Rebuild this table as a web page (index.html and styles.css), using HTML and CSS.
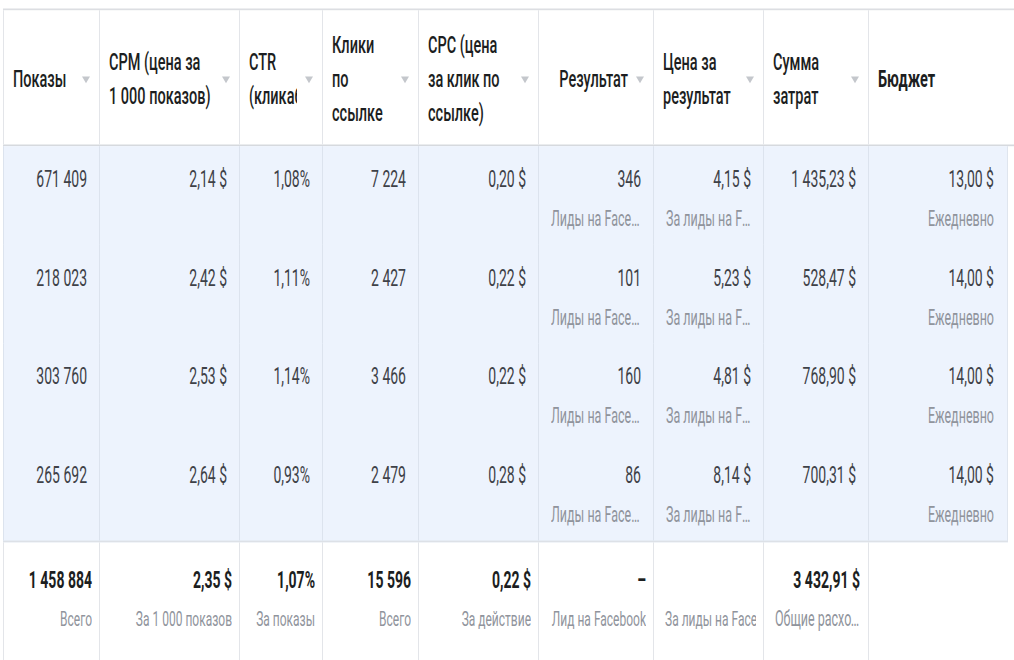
FILE: index.html
```html
<!DOCTYPE html>
<html lang="ru">
<head>
<meta charset="utf-8">
<title>Статистика</title>
<link rel="stylesheet" href="styles.css">
</head>
<body>
<div class="sheet">
  <div class="row head">
    <div class="hcell"><span class="label">Показы</span><span class="arrow"></span></div>
    <div class="hcell"><span class="label">CPM (цена за<br>1 000 показов)</span><span class="arrow"></span></div>
    <div class="hcell"><span class="label clip">CTR<br>(кликабельность ссылки)</span><span class="arrow"></span></div>
    <div class="hcell"><span class="label">Клики<br>по<br>ссылке</span><span class="arrow"></span></div>
    <div class="hcell"><span class="label">CPC (цена<br>за клик по<br>ссылке)</span><span class="arrow"></span></div>
    <div class="hcell right"><span class="label">Результат</span><span class="arrow"></span></div>
    <div class="hcell"><span class="label">Цена за<br>результат</span><span class="arrow"></span></div>
    <div class="hcell"><span class="label">Сумма<br>затрат</span><span class="arrow"></span></div>
    <div class="hcell last"><span class="label strong">Бюджет</span></div>
  </div>

  <div class="body">
    <div class="row">
      <div class="cell"><div class="v">671 409</div></div>
      <div class="cell"><div class="v">2,14 $</div></div>
      <div class="cell"><div class="v">1,08%</div></div>
      <div class="cell"><div class="v">7 224</div></div>
      <div class="cell"><div class="v">0,20 $</div></div>
      <div class="cell"><div class="v">346</div><div class="s">Лиды на Facebook</div></div>
      <div class="cell"><div class="v">4,15 $</div><div class="s">За лиды на Facebook</div></div>
      <div class="cell"><div class="v">1 435,23 $</div></div>
      <div class="cell last"><div class="v">13,00 $</div><div class="s">Ежедневно</div></div>
    </div>
    <div class="row">
      <div class="cell"><div class="v">218 023</div></div>
      <div class="cell"><div class="v">2,42 $</div></div>
      <div class="cell"><div class="v">1,11%</div></div>
      <div class="cell"><div class="v">2 427</div></div>
      <div class="cell"><div class="v">0,22 $</div></div>
      <div class="cell"><div class="v">101</div><div class="s">Лиды на Facebook</div></div>
      <div class="cell"><div class="v">5,23 $</div><div class="s">За лиды на Facebook</div></div>
      <div class="cell"><div class="v">528,47 $</div></div>
      <div class="cell last"><div class="v">14,00 $</div><div class="s">Ежедневно</div></div>
    </div>
    <div class="row">
      <div class="cell"><div class="v">303 760</div></div>
      <div class="cell"><div class="v">2,53 $</div></div>
      <div class="cell"><div class="v">1,14%</div></div>
      <div class="cell"><div class="v">3 466</div></div>
      <div class="cell"><div class="v">0,22 $</div></div>
      <div class="cell"><div class="v">160</div><div class="s">Лиды на Facebook</div></div>
      <div class="cell"><div class="v">4,81 $</div><div class="s">За лиды на Facebook</div></div>
      <div class="cell"><div class="v">768,90 $</div></div>
      <div class="cell last"><div class="v">14,00 $</div><div class="s">Ежедневно</div></div>
    </div>
    <div class="row">
      <div class="cell"><div class="v">265 692</div></div>
      <div class="cell"><div class="v">2,64 $</div></div>
      <div class="cell"><div class="v">0,93%</div></div>
      <div class="cell"><div class="v">2 479</div></div>
      <div class="cell"><div class="v">0,28 $</div></div>
      <div class="cell"><div class="v">86</div><div class="s">Лиды на Facebook</div></div>
      <div class="cell"><div class="v">8,14 $</div><div class="s">За лиды на Facebook</div></div>
      <div class="cell"><div class="v">700,31 $</div></div>
      <div class="cell last"><div class="v">14,00 $</div><div class="s">Ежедневно</div></div>
    </div>
  </div>

  <div class="row foot">
    <div class="fcell"><div class="v">1 458 884</div><div class="s">Всего</div></div>
    <div class="fcell"><div class="v">2,35 $</div><div class="s">За 1 000 показов</div></div>
    <div class="fcell"><div class="v">1,07%</div><div class="s">За показы</div></div>
    <div class="fcell"><div class="v">15 596</div><div class="s">Всего</div></div>
    <div class="fcell"><div class="v">0,22 $</div><div class="s">За действие</div></div>
    <div class="fcell"><div class="v">–</div><div class="s">Лид на Facebook</div></div>
    <div class="fcell"><div class="v">&nbsp;</div><div class="s clipleft">За лиды на Facebook</div></div>
    <div class="fcell narrow"><div class="v">3 432,91 $</div><div class="s">Общие расходы</div></div>
    <div class="fcell last"></div>
  </div>
</div>
</body>
</html>
```

FILE: styles.css
```css
* { box-sizing: border-box; }

html, body {
  margin: 0;
  padding: 0;
  background: #ffffff;
  overflow: hidden;
}

body {
  width: 1014px;
  height: 660px;
  font-family: Roboto, "Liberation Sans", sans-serif;
  color: #1c1e21;
}

.sheet {
  margin-left: 3px;
  padding-top: 5px;
  width: 1011px;
  transform: scaleY(1.7);
  transform-origin: top left;
}

.row {
  display: grid;
  grid-template-columns: 96px 140px 83px 96px 120px 115px 110px 105px 140px;
}

.head {
  height: 81px;
  border-top: 1px solid #dcdee2;
  border-bottom: 1px solid #d6d9de;
}

.hcell {
  display: flex;
  align-items: center;
  gap: 8px;
  padding: 2px 9px 0 9px;
  border-left: 1px solid #e3e5e9;
  min-width: 0;
}

.hcell.right { justify-content: flex-end; padding-right: 9px; }
.hcell.right .label { flex: 0 1 auto; }

.label {
  flex: 1 1 auto;
  min-width: 0;
  font-size: 14.5px;
  line-height: 20px;
  font-weight: 500;
  color: #1c1e21;
  white-space: nowrap;
}

.label.clip { overflow: hidden; }
.label.strong { font-weight: 700; }

.arrow {
  flex: 0 0 auto;
  width: 0;
  height: 0;
  border-left: 4px solid transparent;
  border-right: 4px solid transparent;
  border-top: 4px solid #c4c7cc;
}

.body {
  width: 1005px;
  background: #edf3fd;
  border-bottom: 1px solid #dde1e7;
  border-right: 1px solid #dfe5ee;
}

.body .row { height: 58px; }

.cell {
  padding: 11px 12px 0 12px;
  text-align: right;
  border-left: 1px solid #dce3ee;
  min-width: 0;
}

.cell.last { padding-right: 14px; }

.v {
  font-size: 14px;
  line-height: 16px;
  color: #3e4147;
  white-space: nowrap;
}

.s {
  margin-top: 8px;
  font-size: 12.5px;
  line-height: 16px;
  color: #90949c;
  white-space: nowrap;
  overflow: hidden;
  text-overflow: ellipsis;
}

.foot { height: 80px; }

.fcell {
  padding: 14px 7px 0 4px;
  text-align: right;
  border-left: 1px solid #e3e5e9;
  min-width: 0;
}

.fcell.narrow { padding: 14px 8px 0 11px; }

.fcell .v {
  font-weight: 700;
  color: #1c1e21;
}

.fcell .s {
  margin-top: 7px;
  font-size: 12px;
}

.fcell.narrow .s { font-size: 12.5px; }

.fcell .s.clipleft {
  text-align: left;
  text-overflow: clip;
  padding-left: 7px;
}
```
